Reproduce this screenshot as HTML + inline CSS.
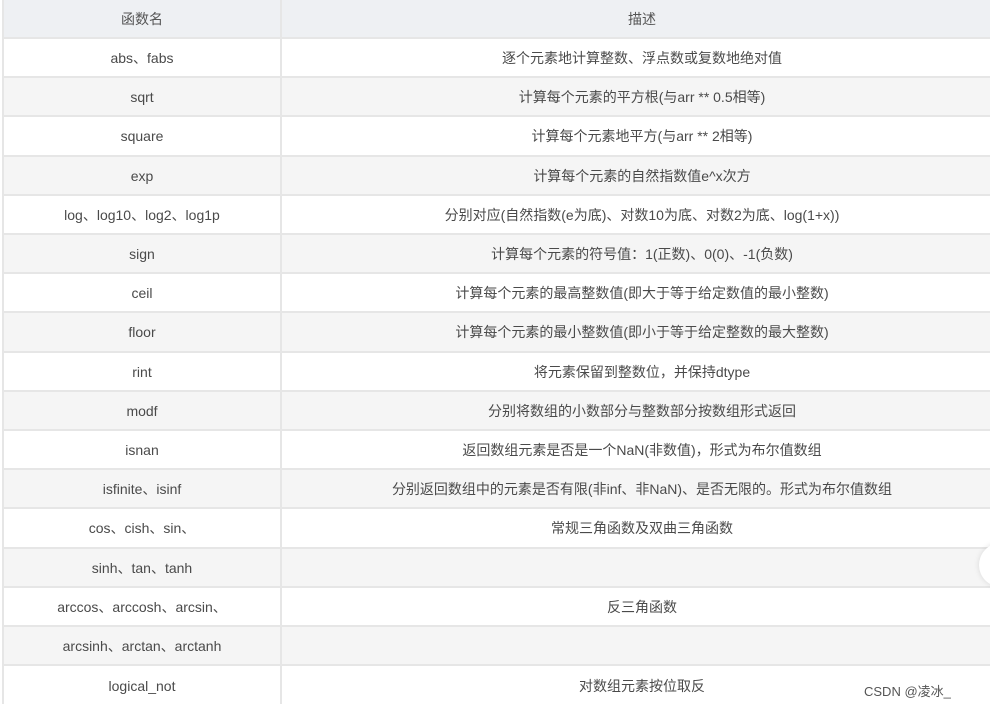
<!DOCTYPE html>
<html><head><meta charset="utf-8"><style>
html,body{margin:0;padding:0;background:#fff;width:990px;height:704px;overflow:hidden;position:relative}
.r{position:absolute;left:2px;width:1000px;font-family:"Liberation Sans","Noto Sans CJK SC",sans-serif;font-size:14px;color:#4a4a4a;border-top:2px solid #e6e6e6;box-sizing:border-box;border-left:2px solid #e6e6e6}
.r div{position:absolute;top:0;bottom:0;display:flex;align-items:center;justify-content:center}
.a{left:0;width:276px;border-right:2px solid #e6e6e6}
.b{left:278px;right:0}
.g{background:#f5f5f5}
.h{background:#eef0f3;color:#555}
.wm{position:absolute;left:864px;top:681px;font:13px "Liberation Sans","Noto Sans CJK SC",sans-serif;color:#555}
.circ{position:absolute;left:979px;top:543px;width:44px;height:44px;border-radius:50%;background:#fff;box-shadow:0 0 6px rgba(0,0,0,.12)}
</style></head><body>
<div class="r h" style="top:-2px;height:40px"><div class="a">函数名</div><div class="b">描述</div></div>
<div class="r" style="top:37px;height:40px"><div class="a">abs、fabs</div><div class="b">逐个元素地计算整数、浮点数或复数地绝对值</div></div>
<div class="r g" style="top:76.2px;height:40px"><div class="a">sqrt</div><div class="b">计算每个元素的平方根(与arr ** 0.5相等)</div></div>
<div class="r" style="top:115.4px;height:40px"><div class="a">square</div><div class="b">计算每个元素地平方(与arr ** 2相等)</div></div>
<div class="r g" style="top:154.6px;height:40px"><div class="a">exp</div><div class="b">计算每个元素的自然指数值e^x次方</div></div>
<div class="r" style="top:193.8px;height:40px"><div class="a">log、log10、log2、log1p</div><div class="b">分别对应(自然指数(e为底)、对数10为底、对数2为底、log(1+x))</div></div>
<div class="r g" style="top:233px;height:40px"><div class="a">sign</div><div class="b">计算每个元素的符号值：1(正数)、0(0)、-1(负数)</div></div>
<div class="r" style="top:272.2px;height:40px"><div class="a">ceil</div><div class="b">计算每个元素的最高整数值(即大于等于给定数值的最小整数)</div></div>
<div class="r g" style="top:311.4px;height:40px"><div class="a">floor</div><div class="b">计算每个元素的最小整数值(即小于等于给定整数的最大整数)</div></div>
<div class="r" style="top:350.6px;height:40px"><div class="a">rint</div><div class="b">将元素保留到整数位，并保持dtype</div></div>
<div class="r g" style="top:389.8px;height:40px"><div class="a">modf</div><div class="b">分别将数组的小数部分与整数部分按数组形式返回</div></div>
<div class="r" style="top:429px;height:40px"><div class="a">isnan</div><div class="b">返回数组元素是否是一个NaN(非数值)，形式为布尔值数组</div></div>
<div class="r g" style="top:468.2px;height:40px"><div class="a">isfinite、isinf</div><div class="b">分别返回数组中的元素是否有限(非inf、非NaN)、是否无限的。形式为布尔值数组</div></div>
<div class="r" style="top:507.4px;height:40px"><div class="a">cos、cish、sin、</div><div class="b">常规三角函数及双曲三角函数</div></div>
<div class="r g" style="top:546.6px;height:40px"><div class="a">sinh、tan、tanh</div><div class="b"></div></div>
<div class="r" style="top:585.8px;height:40px"><div class="a">arccos、arccosh、arcsin、</div><div class="b">反三角函数</div></div>
<div class="r g" style="top:625px;height:40px"><div class="a">arcsinh、arctan、arctanh</div><div class="b"></div></div>
<div class="r" style="top:664.2px;height:42px"><div class="a">logical_not</div><div class="b">对数组元素按位取反</div></div>
<div class="circ"></div>
<div class="wm">CSDN @凌冰_</div>
</body></html>
